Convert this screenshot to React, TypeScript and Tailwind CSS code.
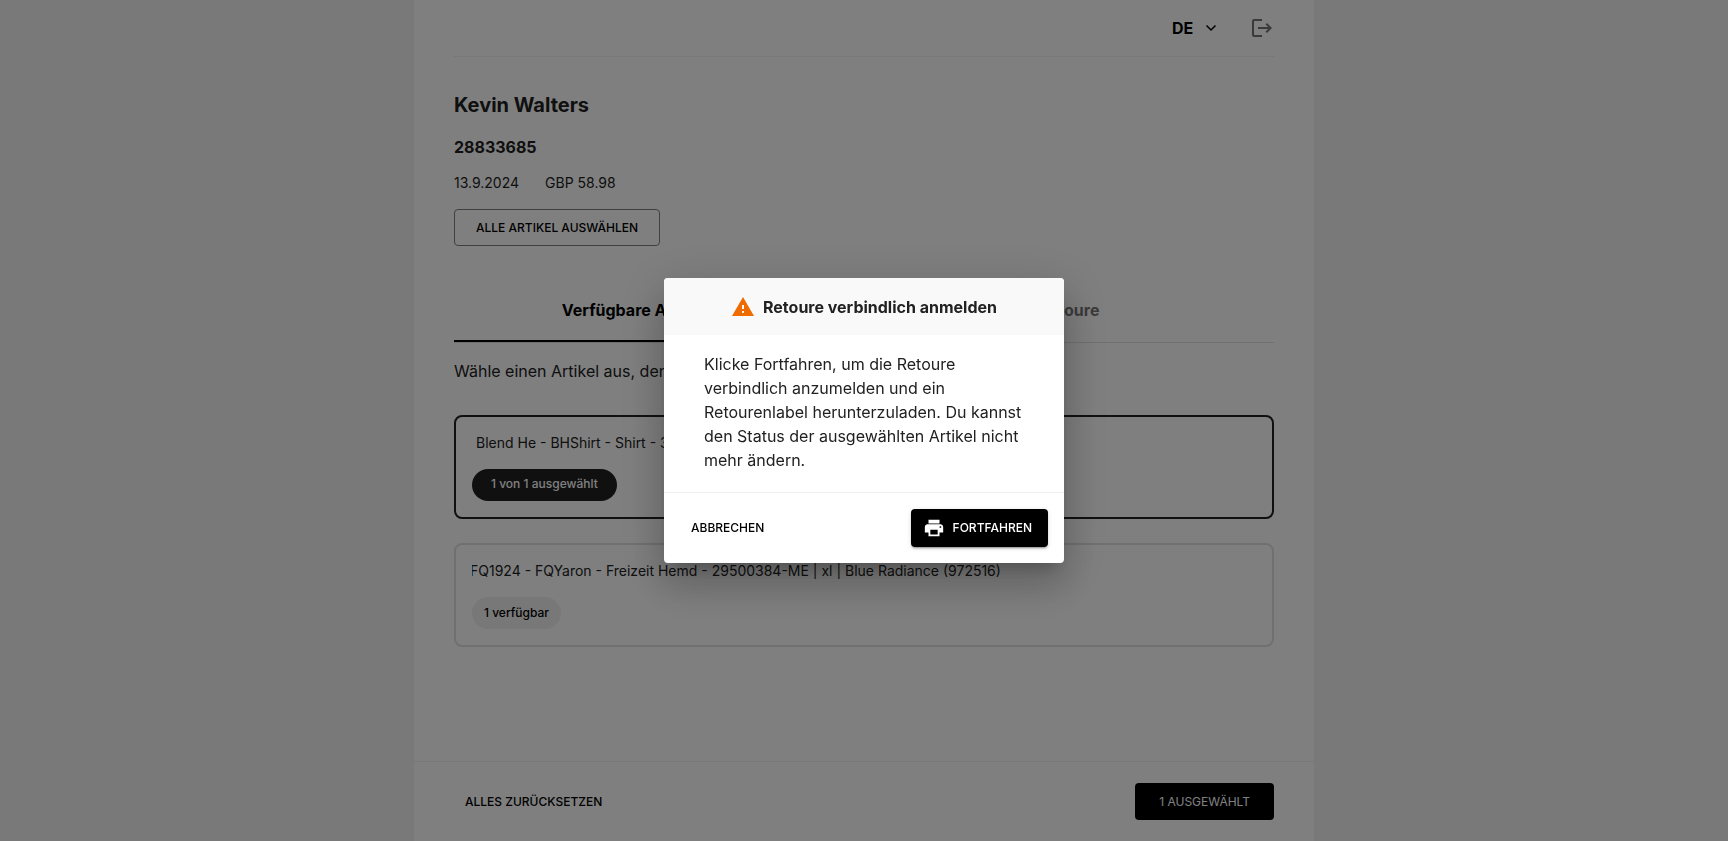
import { useState } from 'react';
import { MdLogout, MdPrint, MdWarning } from 'react-icons/md';

const items = [
  {
    id: 1,
    title: 'Blend He - BHShirt - Shirt - 30715019-ME | xl | Black (200002)',
    label: '1 von 1 ausgewählt',
    selected: true,
  },
  {
    id: 2,
    title: 'FQ1924 - FQYaron - Freizeit Hemd - 29500384-ME | xl | Blue Radiance (972516)',
    label: '1 verfügbar',
    selected: false,
  },
];

const tabs = ['Verfügbare Artikel (2 / 2)', 'Retoure'];

function Header() {
  return (
    <header className="flex h-[57px] items-center justify-end border-b border-[#f0f0f0]">
      <div className="relative mr-8 flex items-center">
        <select
          aria-label="Sprache"
          defaultValue="DE"
          className="appearance-none bg-transparent pr-6 text-base font-bold text-black"
        >
          <option>DE</option>
          <option>EN</option>
        </select>
        <svg
          className="pointer-events-none absolute right-px h-3 w-3"
          viewBox="0 0 12 12"
          fill="none"
          stroke="black"
          strokeWidth="1.5"
        >
          <path d="M1.5 3.5 6 8l4.5-4.5" />
        </svg>
      </div>
      <button aria-label="Abmelden" className="text-[#757575]">
        <MdLogout size={24} />
      </button>
    </header>
  );
}

function ItemCard({ item }: { item: (typeof items)[number] }) {
  return (
    <li
      className={`flex flex-col items-start rounded-lg border-2 p-4 ${
        item.selected ? 'border-[#212121]' : 'border-[#e0e0e0]'
      }`}
    >
      <p className={`w-full overflow-hidden text-sm whitespace-nowrap ${item.selected ? 'pl-1' : ''}`}>
        <span className={item.selected ? '' : '-ml-0.5'}>{item.title}</span>
      </p>
      <button
        className={`mt-4 h-8 rounded-full text-xs font-medium ${
          item.selected ? 'bg-[#212121] px-[19px] pb-0.5 text-white' : 'bg-[#f0f0f0] px-3 text-black'
        }`}
      >
        {item.label}
      </button>
    </li>
  );
}

function ConfirmDialog({ onClose }: { onClose: () => void }) {
  return (
    <div className="fixed inset-0 flex items-center justify-center bg-black/50">
      <div
        role="dialog"
        aria-modal="true"
        aria-labelledby="dialog-title"
        className="w-[400px] overflow-hidden rounded bg-white shadow-[0_11px_15px_-7px_rgba(0,0,0,0.2),0_24px_38px_3px_rgba(0,0,0,0.14),0_9px_46px_8px_rgba(0,0,0,0.12)]"
      >
        <div className="flex h-[57px] items-center justify-center gap-2 bg-[#f9f9f9]">
          <MdWarning size={24} className="text-[#ef6c00]" />
          <h2 id="dialog-title" className="text-base font-bold">
            Retoure verbindlich anmelden
          </h2>
        </div>
        <p className="px-10 pt-[17px] pb-5 text-base">
          Klicke Fortfahren, um die Retoure verbindlich anzumelden und ein Retourenlabel herunterzuladen. Du kannst
          den Status der ausgewählten Artikel nicht mehr ändern.
        </p>
        <div className="flex items-center justify-between border-t border-[#f0f0f0] p-4">
          <button onClick={onClose} className="px-[11px] text-xs font-medium text-black">
            ABBRECHEN
          </button>
          <button
            onClick={onClose}
            className="flex h-[38px] items-center gap-2 rounded bg-black pr-4 pl-3 text-xs font-medium text-white shadow-[0_3px_1px_-2px_rgba(0,0,0,0.2),0_2px_2px_rgba(0,0,0,0.14),0_1px_5px_rgba(0,0,0,0.12)]"
          >
            <MdPrint size={22} />
            FORTFAHREN
          </button>
        </div>
      </div>
    </div>
  );
}

export default function App() {
  const [open, setOpen] = useState(true);
  const [tab, setTab] = useState(0);

  return (
    <div className="min-h-screen bg-[#f2f2f2] font-['Inter',sans-serif] text-[#212121]">
      <div className="mx-auto flex min-h-screen max-w-[900px] flex-col bg-white">
        <main className="grow px-10">
          <Header />

          <h1 className="mt-8 text-xl leading-8 font-bold">Kevin Walters</h1>
          <p className="mt-3.5 text-base font-bold">28833685</p>
          <div className="mt-3.5 flex gap-[26px] text-sm">
            <span>13.9.2024</span>
            <span>GBP 58.98</span>
          </div>
          <button className="mt-4 h-[37px] rounded border border-[#808080] px-[21px] text-xs font-medium text-black">
            ALLE ARTIKEL AUSWÄHLEN
          </button>

          {/* Tabs */}
          <div role="tablist" className="mt-8 grid h-[65px] grid-cols-2 border-b border-[#e0e0e0]">
            {tabs.map((name, i) => (
              <button
                key={name}
                role="tab"
                aria-selected={tab === i}
                onClick={() => setTab(i)}
                className={`border-b-2 pt-0.5 text-base font-bold ${
                  tab === i ? 'border-black text-black' : 'border-transparent text-[#757575]'
                }`}
              >
                {name}
              </button>
            ))}
          </div>

          <p className="mt-4 text-base">Wähle einen Artikel aus, den du retournieren möchtest.</p>

          <ul className="mt-8 flex flex-col gap-6">
            {items.map(item => (
              <ItemCard key={item.id} item={item} />
            ))}
          </ul>
        </main>

        <footer className="flex h-20 items-center justify-between border-t border-[#f0f0f0] px-10">
          <button className="px-[11px] text-xs font-medium text-black">ALLES ZURÜCKSETZEN</button>
          <button onClick={() => setOpen(true)} className="h-[37px] rounded bg-black px-6 text-xs text-white">
            1 AUSGEWÄHLT
          </button>
        </footer>
      </div>

      {open && <ConfirmDialog onClose={() => setOpen(false)} />}
    </div>
  );
}
